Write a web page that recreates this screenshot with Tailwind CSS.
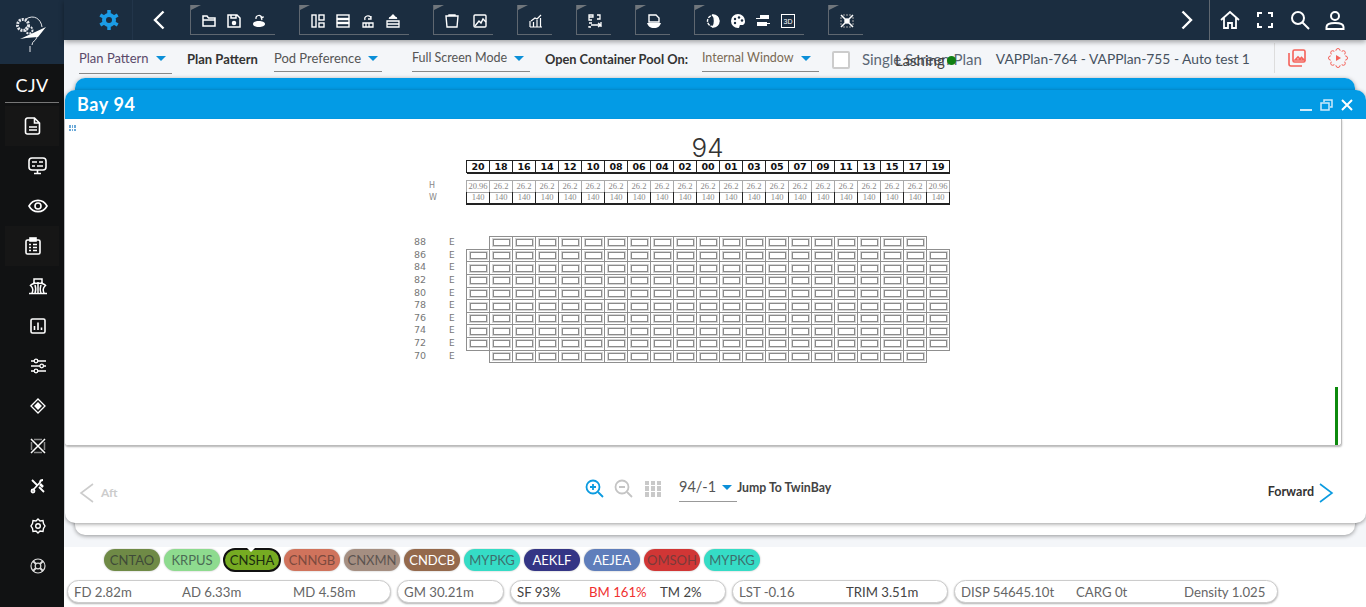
<!DOCTYPE html>
<html lang="en">
  <head>
    <meta charset="UTF-8" />
    <meta name="viewport" content="width=device-width, initial-scale=1.0" />
    <title>Bay 94</title>
    <script src="https://cdn.jsdelivr.net/npm/@tailwindcss/browser@4"></script>
  </head>

  <body class="bg-white font-['Lato',sans-serif] text-[#444]">
    <div class="flex w-[1366px] h-[607px] overflow-hidden">
      <!-- Sidebar -->
      <aside class="w-16 shrink-0 flex flex-col bg-[#111213] text-white">
        <div class="h-16 bg-[#1b2d40] flex items-center justify-center">
          <svg width="40" height="44" viewBox="0 0 40 44" fill="none" stroke="#e5e7eb">
            <circle cx="11" cy="15" r="5.500" stroke-width="3" stroke-dasharray="2 1" />
            <circle cx="17" cy="20" r="3.500" stroke-width="2" stroke-dasharray="2 1" />
            <path d="M14 9c8-5 15 0 16 8M25 27c-1 4-5 4-5 8M18 36v6" stroke-width="1" />
            <path d="M8 29l26-12-8 10-12 1z" fill="#fff" stroke="none" />
          </svg>
        </div>
        <div class="mx-[5px] h-[39px] pt-[5px] border-b border-[#777] flex items-center justify-center text-[18px] tracking-wide">CJV</div>
        <div class="flex flex-col mt-[3px]">
          <div class="mx-[5px] h-10 bg-[#161616] flex items-center justify-center">
            <svg class="ml-[2px]" width="18" height="18" viewBox="0 0 18 18" fill="none" stroke="#fff" stroke-width="1.600"><path d="M3.500 1h7l5 5v9a2 2 0 0 1-2 2h-10a2 2 0 0 1-2-2v-12a2 2 0 0 1 2-2zM5 10h8M5 13h8M10.500 1v5h5" /></svg>
          </div>
          <div class="h-10 flex items-center justify-center pl-3">
            <svg width="20" height="18" viewBox="0 0 20 18" fill="none" stroke="#fff" stroke-width="1.600"><rect x="1" y="1" width="17" height="12" rx="3" /><path d="M4 5h5M11 5h4M4 9h3M9 9h6M6 16.500h7M9.500 13v3" /></svg>
          </div>
          <div class="h-10 flex items-center justify-center pl-3">
            <svg width="20" height="14" viewBox="0 0 20 14" fill="none" stroke="#fff" stroke-width="1.600"><path d="M1 7c4-7.500 14-7.500 18 0-4 7.500-14 7.500-18 0z" /><circle cx="10" cy="7" r="3" /></svg>
          </div>
          <div class="mx-[5px] h-10 bg-[#161616] flex items-center justify-center">
            <svg class="ml-[2px]" width="16" height="18" viewBox="0 0 16 18" fill="none" stroke="#fff" stroke-width="1.600"><rect x="1" y="3" width="14" height="14" rx="1.500" /><rect x="5" y="1" width="6" height="3" fill="#fff" /><path d="M4 7.500h2M8 7.500h4M4 10.500h2M8 10.500h4M4 13.500h2M8 13.500h4" /></svg>
          </div>
          <div class="h-10 flex items-center justify-center pl-3">
            <svg width="20" height="18" viewBox="0 0 20 18" fill="none" stroke="#fff" stroke-width="1.500"><path d="M6 6V2h8v4M2 9c3-4 13-4 16 0M10 5v11M1 16.500h18M3 9c2 2 2 5 1 7M17 9c-2 2-2 5-1 7M7 8c1 3 1 6 0 8M13 8c-1 3-1 6 0 8" /></svg>
          </div>
          <div class="h-10 flex items-center justify-center pl-3">
            <svg width="16" height="16" viewBox="0 0 16 16" fill="none" stroke="#fff" stroke-width="1.600"><rect x="1" y="1" width="14" height="14" rx="1.500" /><path d="M4.500 12V8M8 12V4.500M11.500 12V9.500" /></svg>
          </div>
          <div class="h-10 flex items-center justify-center pl-3">
            <svg width="17" height="16" viewBox="0 0 17 16" fill="none" stroke="#fff" stroke-width="1.300"><path d="M1 3h3.500M8 3h8M1 8h9M13.500 8h2.500M1 13h3.500M8 13h8" /><circle cx="6" cy="3" r="1.800" /><circle cx="11.700" cy="8" r="1.800" /><circle cx="6" cy="13" r="1.800" /></svg>
          </div>
          <div class="h-10 flex items-center justify-center pl-3">
            <svg width="16" height="16" viewBox="0 0 16 16" fill="none" stroke="#fff" stroke-width="1.300"><path d="M8 1l7 7-7 7-7-7z" /><path d="M8 5l3 3-3 3-3-3z" fill="#fff" /></svg>
          </div>
          <div class="h-10 flex items-center justify-center pl-3">
            <svg width="16" height="16" viewBox="0 0 16 16" fill="none" stroke="#fff" stroke-width="1.500"><path d="M1 1l14 14M15 1L1 15" /><path d="M4 1.500h8M4 14.500h8M1.500 4v8M14.500 4v8" stroke="#888" /></svg>
          </div>
          <div class="h-10 flex items-center justify-center pl-3">
            <svg width="16" height="16" viewBox="0 0 16 16" fill="none" stroke="#fff" stroke-width="1.800"><path d="M2 2l5 5M9 9l5 5M13 2c-2 0-3 1-3 2.500L3 12" /><circle cx="3" cy="13" r="1.500" /><path d="M10 6l3 3" stroke-width="2.500" /></svg>
          </div>
          <div class="h-10 flex items-center justify-center pl-3">
            <svg width="16" height="16" viewBox="0 0 16 16" fill="none" stroke="#fff" stroke-width="1.400"><path d="M8 1l2 2 3-.500 .500 3 1.500 2.500-1.500 2.500-.500 3-3-.500-2 2-2-2-3 .500-.500-3L1 8l1.500-2.500.500-3 3 .500z" /><circle cx="8" cy="8" r="2.300" /></svg>
          </div>
          <div class="h-10 flex items-center justify-center pl-3">
            <svg width="16" height="16" viewBox="0 0 16 16" fill="none" stroke="#ddd" stroke-width="1.200"><circle cx="8" cy="8" r="7" /><circle cx="8" cy="8" r="2.800" /><path d="M3 3l3 3M13 3l-3 3M3 13l3-3M13 13l-3-3" stroke-width="1.800" /></svg>
          </div>
        </div>
      </aside>

      <main class="flex-1 min-w-0 flex flex-col">
        <!-- Top bar -->
        <header class="h-10 shrink-0 bg-[#1b2d40] flex items-start text-white relative z-10 shadow-[0_2px_5px_rgba(0,0,0,0.35)]">
          <div class="w-[69px] h-10 flex items-center justify-end pr-[13px] border-r border-[#22354a]">
            <svg width="20" height="20" viewBox="0 0 20 20" fill="none" stroke="#1b9ce6" stroke-width="4"><circle cx="10" cy="10" r="5" /><path d="M10 0v4M10 16v4M1.300 5l3.500 2M15.200 13l3.500 2M1.300 15l3.500-2M15.200 7l3.500-2" stroke-width="3.500" /></svg>
          </div>
          <div class="w-[57px] h-10 flex items-center pl-5">
            <svg width="12" height="20" viewBox="0 0 12 20" fill="none" stroke="#fff" stroke-width="2.400"><path d="M10.500 1.500L2 10l8.500 8.500" /></svg>
          </div>

          <div class="relative mt-[5px] w-[85px] h-[30px] border-l border-b border-[#5f6770] flex items-center gap-[11px] pl-[11px] pt-[2px]">
            <span class="absolute left-0 top-0 border-l-[10px] border-l-[#70767c] border-b-[5px] border-b-transparent border-t-0"></span>
            <svg width="14" height="14" viewBox="0 0 14 14" fill="none" stroke="#fff" stroke-width="1.500"><path d="M1 12V2h4l1.500 2H13v8zM1 6h12" /></svg>
            <svg width="14" height="14" viewBox="0 0 14 14" fill="none" stroke="#fff" stroke-width="1.500"><path d="M1 1h9l3 3v9H1zM4 1v3h5V1" /><circle cx="7" cy="9" r="1.500" fill="#fff" /></svg>
            <svg width="14" height="14" viewBox="0 0 14 14" fill="#fff"><path d="M1 10c0-2 3-3 6-3s6 1 6 3-3 3-6 3-6-1-6-3z" /><path d="M4 5a3 3 0 0 1 6-1l1-1M10 6l-1-3h3" fill="none" stroke="#fff" stroke-width="1.200" /></svg>
          </div>

          <div class="relative ml-6 mt-[5px] w-[110px] h-[30px] border-l border-b border-[#5f6770] flex items-center gap-[11px] pl-[11px] pt-[2px]">
            <span class="absolute left-0 top-0 border-l-[10px] border-l-[#70767c] border-b-[5px] border-b-transparent border-t-0"></span>
            <svg width="14" height="14" viewBox="0 0 14 14" fill="none" stroke="#fff" stroke-width="1.400"><rect x="1" y="1" width="4" height="12" /><rect x="8" y="1" width="5" height="5" /><rect x="8" y="9" width="5" height="4" /></svg>
            <svg width="14" height="14" viewBox="0 0 14 14" fill="none" stroke="#fff" stroke-width="1.400"><rect x="1" y="1" width="12" height="3.500" /><rect x="1" y="5.500" width="12" height="3" /><rect x="1" y="9.500" width="12" height="3.500" /></svg>
            <svg width="14" height="14" viewBox="0 0 14 14" fill="none" stroke="#fff" stroke-width="1.300"><path d="M2 13V9h10v4zM5 9v4M8 9v4M4 6a3 3 0 0 1 6-2M10 2v3H7" /></svg>
            <svg width="14" height="14" viewBox="0 0 14 14" fill="none" stroke="#fff" stroke-width="1.300"><path d="M1 13V7h12v6zM1 10h12M3 4h8M7 1v3" /><path d="M4 4L7 1l3 3z" fill="#fff" /></svg>
          </div>

          <div class="relative ml-6 mt-[5px] w-[60px] h-[30px] border-l border-b border-[#5f6770] flex items-center gap-[14px] pl-[11px] pt-[2px]">
            <span class="absolute left-0 top-0 border-l-[10px] border-l-[#70767c] border-b-[5px] border-b-transparent border-t-0"></span>
            <svg width="14" height="14" viewBox="0 0 14 14" fill="none" stroke="#fff" stroke-width="1.400"><path d="M1 2h12l-1 11H2zM4 2V1h6v1" /></svg>
            <svg width="14" height="14" viewBox="0 0 14 14" fill="none" stroke="#fff" stroke-width="1.400"><rect x="1" y="1" width="12" height="12" rx="1" /><path d="M2 12l4-5 2 2 2-4 3 3" /></svg>
          </div>

          <div class="relative ml-6 mt-[5px] w-[35px] h-[30px] border-l border-b border-[#5f6770] flex items-center pl-[11px] pt-[2px]">
            <span class="absolute left-0 top-0 border-l-[10px] border-l-[#70767c] border-b-[5px] border-b-transparent border-t-0"></span>
            <svg width="14" height="14" viewBox="0 0 14 14" fill="none" stroke="#fff" stroke-width="1.200"><path d="M1 13V7M1 13h12M4.500 13V8M8 13V6M11.500 13V4M2 7l4-3 2 1 4-4" /></svg>
          </div>

          <div class="relative ml-6 mt-[5px] w-[35px] h-[30px] border-l border-b border-[#5f6770] flex items-center pl-[11px] pt-[2px]">
            <span class="absolute left-0 top-0 border-l-[10px] border-l-[#70767c] border-b-[5px] border-b-transparent border-t-0"></span>
            <svg width="14" height="14" viewBox="0 0 14 14" fill="none" stroke="#fff" stroke-width="1.300"><path d="M1 1h4v2H1zM1 3v3h3M9 1h3v4H9M1 9h3M3 11h9M10 9l3 2-3 2M13 8v5M1 12v1h2" /></svg>
          </div>

          <div class="relative ml-6 mt-[5px] w-[35px] h-[30px] border-l border-b border-[#5f6770] flex items-center pl-[11px] pt-[2px]">
            <span class="absolute left-0 top-0 border-l-[10px] border-l-[#70767c] border-b-[5px] border-b-transparent border-t-0"></span>
            <svg width="14" height="14" viewBox="0 0 14 14" fill="#fff"><path d="M2 1h7l3 3v4H2z" fill="none" stroke="#fff" stroke-width="1.400" /><path d="M0 9h14c-1 3-3 5-7 5s-6-2-7-5z" /></svg>
          </div>

          <div class="relative ml-6 mt-[5px] w-[110px] h-[30px] border-l border-b border-[#5f6770] flex items-center gap-[11px] pl-[11px] pt-[2px]">
            <span class="absolute left-0 top-0 border-l-[10px] border-l-[#70767c] border-b-[5px] border-b-transparent border-t-0"></span>
            <svg width="14" height="14" viewBox="0 0 14 14" fill="none" stroke="#fff" stroke-width="1.400"><circle cx="7" cy="7" r="5.500" stroke-dasharray="3 1" /><path d="M7 1a6 6 0 0 1 0 12c2-3 2-9 0-12z" fill="#fff" /></svg>
            <svg width="14" height="14" viewBox="0 0 14 14" fill="#fff"><path d="M7 0a7 7 0 1 0 0 14c2 0 1-2 2-3h3c2-1 2-3 2-4a7 7 0 0 0-7-7z" /><circle cx="4" cy="5" r="1.200" fill="#1b2d40" /><circle cx="8" cy="3.500" r="1.200" fill="#1b2d40" /><circle cx="11" cy="6.500" r="1.200" fill="#1b2d40" /><circle cx="4" cy="9" r="1.200" fill="#1b2d40" /></svg>
            <svg width="14" height="14" viewBox="0 0 14 14" fill="#fff"><path d="M4 1h9v4H4zM1 8h10v4H1zM0 4h4v1H0zM11 9h3v1h-3z" /></svg>
            <svg width="14" height="14" viewBox="0 0 14 14" fill="none" stroke="#fff"><rect x=".5" y=".5" width="13" height="13" /><text x="7" y="10" text-anchor="middle" font-size="7" font-family="Liberation Sans" fill="#fff" stroke="none">3D</text></svg>
          </div>

          <div class="relative ml-6 mt-[5px] w-[35px] h-[30px] border-l border-b border-[#5f6770] flex items-center pl-[11px] pt-[2px]">
            <span class="absolute left-0 top-0 border-l-[10px] border-l-[#70767c] border-b-[5px] border-b-transparent border-t-0"></span>
            <svg width="14" height="14" viewBox="0 0 14 14" fill="none" stroke="#fff" stroke-width="1.500"><path d="M1 1l12 12M13 1L1 13" /><path d="M3 1h8M3 13h8M1 3v8M13 3v8" stroke="#aaa" stroke-width="1" stroke-dasharray="2 1" /><circle cx="7" cy="7" r="2" fill="#fff" /></svg>
          </div>

          <div class="ml-auto w-[52px] h-10 flex items-center justify-start pl-[24px]">
            <svg width="12" height="20" viewBox="0 0 12 20" fill="none" stroke="#fff" stroke-width="2.400"><path d="M1.500 1.500L10 10l-8.500 8.500" /></svg>
          </div>
          <div class="h-10 w-[157px] border-l border-[#5f6770] flex items-center pl-[10px] gap-[15px]">
            <svg width="20" height="20" viewBox="0 0 20 20" fill="none" stroke="#fff" stroke-width="1.800"><path d="M1 10l9-8 9 8M4 8v10h4v-5h4v5h4V8" /></svg>
            <svg width="20" height="20" viewBox="0 0 20 20" fill="none" stroke="#fff" stroke-width="2"><path d="M3 7V3h4M13 3h4v4M17 13v4h-4M7 17H3v-4" /></svg>
            <svg width="20" height="20" viewBox="0 0 20 20" fill="none" stroke="#fff" stroke-width="2"><circle cx="8" cy="8" r="6" /><path d="M12.500 12.500L19 19" /></svg>
            <svg width="20" height="20" viewBox="0 0 20 20" fill="none" stroke="#fff" stroke-width="2"><circle cx="10" cy="6" r="4" /><path d="M1.500 19v-2c0-3 5-4 8.500-4s8.500 1 8.500 4v2z" /></svg>
          </div>
        </header>

        <!-- Workspace -->
        <div class="h-[507px] shrink-0 relative bg-[#f4f6f9]">
          <!-- Options strip -->
          <div class="h-[38px] flex items-start text-[13px] relative">
            <div class="ml-[15px] mt-[8px] w-[93px] h-[26px] border-b border-[#888] flex items-start text-[#5a4a6a] pt-[1px]">Plan Pattern<span class="ml-[7px] mt-[7px] border-x-[5px] border-x-transparent border-t-[5px] border-t-[#0b8fd8]"></span></div>
            <div class="ml-[15px] mt-[10px] font-bold text-[#333]">Plan Pattern</div>
            <div class="ml-4 mt-[8px] w-[108px] h-[24px] border-b border-[#888] flex items-start text-[#555] pt-[1px]">Pod Preference<span class="ml-[7px] mt-[7px] border-x-[5px] border-x-transparent border-t-[5px] border-t-[#0b8fd8]"></span></div>
            <div class="ml-[30px] mt-[8px] w-[118px] h-[24px] border-b border-[#888] flex items-start text-[12.500px] text-[#555] pt-[1px]">Full Screen Mode<span class="ml-[7px] mt-[7px] border-x-[5px] border-x-transparent border-t-[5px] border-t-[#0b8fd8]"></span></div>
            <div class="ml-[15px] mt-[10px] font-bold text-[12.800px] text-[#333]">Open Container Pool On:</div>
            <div class="ml-[14px] mt-[8px] w-[117px] h-[24px] border-b border-[#888] flex items-start text-[12.500px] text-[#7a6a55] pt-[1px]">Internal Window<span class="ml-[7px] mt-[7px] border-x-[5px] border-x-transparent border-t-[5px] border-t-[#0b8fd8]"></span></div>
            <div class="ml-[13px] mt-[11px] w-[18px] h-[18px] rounded-[2px] border-2 border-[#ccc] bg-white"></div>
            <div class="ml-3 mt-[8px] text-[15px] text-[#5b6775] relative">Single Screen Plan
              <span class="absolute left-[33px] top-[1px] text-[#444] whitespace-nowrap">Lashing</span>
              <span class="absolute left-[85px] top-[8px] w-[9px] h-[9px] rounded-full bg-[#0f7f12]"></span>
            </div>
            <div class="ml-[14px] mt-[9px] text-[13.800px] text-[#46525f] whitespace-nowrap">VAPPlan-764 - VAPPlan-755 - Auto test 1</div>
            <div class="absolute left-[1210px] top-[3px] w-[92px] h-[30px] border-l border-[#ddd] flex items-center gap-[22px] pl-[13px]">
              <svg width="18" height="18" viewBox="0 0 18 18" fill="none" stroke="#f4625a" stroke-width="1.600"><rect x="5" y="1" width="12" height="12" rx="1.500" /><path d="M1 4v11a2 2 0 0 0 2 2h11M7 11l3-3 2 2 1.500-1.500L16 11z" /></svg>
              <svg width="20" height="20" viewBox="0 0 20 20" fill="none" stroke="#f4625a" stroke-width="1"><circle cx="17.500" cy="10" r="2" /><circle cx="15.300" cy="15.300" r="2" /><circle cx="10" cy="17.500" r="2" /><circle cx="4.700" cy="15.300" r="2" /><circle cx="2.500" cy="10" r="2" /><circle cx="4.700" cy="4.700" r="2" /><circle cx="10" cy="2.500" r="2" /><circle cx="15.300" cy="4.700" r="2" /><circle cx="10" cy="10" r="7.500" fill="#f4f6f9" stroke="none" /><path d="M8 7l5 3-5 3z" fill="#f4625a" stroke="none" /></svg>
            </div>
          </div>

          <!-- Back window -->
          <div class="absolute left-[11px] top-[38px] w-[1280px] h-[457px] rounded-[10px] bg-white shadow-[0_1px_4px_rgba(0,0,0,0.4)]">
            <div class="h-6 rounded-t-[10px] bg-[#039be5]"></div>
          </div>

          <!-- Bay window -->
          <section class="absolute left-[1px] top-[50px] w-[1301px] h-[433px] rounded-[10px] bg-white shadow-[0_1px_4px_rgba(0,0,0,0.4)] flex flex-col">
            <div class="h-[29px] shrink-0 rounded-t-[10px] bg-[#039be5] flex items-center text-white pl-3">
              <span class="text-[18px] font-bold tracking-[0.600px]">Bay 94</span>
              <div class="ml-auto flex items-center gap-2 pr-[13px]">
                <span class="w-3 h-[2px] bg-[#cfeafa] mt-[10px]"></span>
                <svg width="13" height="12" viewBox="0 0 13 12" fill="none" stroke="#cfeafa" stroke-width="1.500"><rect x="1" y="4" width="8" height="7" /><path d="M4 3V1h8v7h-2" /></svg>
                <svg width="12" height="12" viewBox="0 0 12 12" fill="none" stroke="#fff" stroke-width="2"><path d="M1 1l10 10M11 1L1 11" /></svg>
              </div>
            </div>

            <div class="h-[327px] shrink-0 mr-6 rounded-b-[3px] border-b border-r border-[#bbb] shadow-[0_1px_2px_rgba(0,0,0,0.3)] relative">
              <div class="absolute left-1 top-[6px] w-[7px] h-[6px] grid grid-cols-3 grid-rows-2 gap-[1px]">
                <i class="bg-[#6aa9d8]"></i><i class="bg-[#6aa9d8]"></i><i class="bg-[#6aa9d8]"></i><i class="bg-[#6aa9d8]"></i><i class="bg-[#6aa9d8]"></i><i class="bg-[#6aa9d8]"></i>
              </div>
              <div class="absolute right-[3px] bottom-0 w-[3px] h-[58px] bg-[#0d8a0d]"></div>

              <div class="pt-[12px] w-[483px] ml-[401px]">
                <div class="h-[29px] pt-[5px] text-center text-[26px] leading-[23px] text-[#333] font-['Inter',sans-serif] font-light">94</div>
                <div id="colHead" class="grid grid-cols-[repeat(21,23px)] border-l border-[#222] w-[484px] h-[13px]"></div>

                <div class="relative mt-[7px]">
                  <span class="absolute left-[-37px] top-0 text-[8px] leading-[11px] text-[#888] font-['DejaVu_Sans',sans-serif]">H</span>
                  <span class="absolute left-[-37px] top-[12px] text-[8px] leading-[11px] text-[#888] font-['DejaVu_Sans',sans-serif]">W</span>
                  <div id="heightRow" class="grid grid-cols-[repeat(21,23px)] w-[484px] h-[12px] border-l border-[#aaa]"></div>
                  <div id="weightRow" class="grid grid-cols-[repeat(21,23px)] w-[484px] h-[13px] border-l border-[#222]"></div>
                </div>

                <div id="tiers" class="mt-[31px] relative"></div>
              </div>
            </div>

            <!-- Bay navigation -->
            <div class="flex-1 flex items-center relative pt-[16px] pl-[14px] pr-[32px]">
              <svg width="16" height="20" viewBox="0 0 16 20" fill="none" stroke="#ccc" stroke-width="1.600"><path d="M14 1L2 10l12 9" /></svg>
              <span class="ml-[6px] text-[12px] font-bold text-[#ccc]">Aft</span>
              <div class="absolute left-[520px] top-[29px] flex items-center">
                <svg width="19" height="19" viewBox="0 0 19 19" fill="none" stroke="#0b9be0" stroke-width="1.800"><circle cx="8" cy="8" r="6.500" /><path d="M13 13l5 5M5 8h6M8 5v6" /></svg>
                <svg class="ml-[10px]" width="19" height="19" viewBox="0 0 19 19" fill="none" stroke="#c4c4c4" stroke-width="1.800"><circle cx="8" cy="8" r="6.500" /><path d="M13 13l5 5M5 8h6" /></svg>
                <div class="ml-3 grid grid-cols-3 gap-[1.500px] w-4 h-4">
                  <i class="bg-[#c9c9c9]"></i><i class="bg-[#c9c9c9]"></i><i class="bg-[#c9c9c9]"></i><i class="bg-[#c9c9c9]"></i><i class="bg-[#c9c9c9]"></i><i class="bg-[#c9c9c9]"></i><i class="bg-[#c9c9c9]"></i><i class="bg-[#c9c9c9]"></i><i class="bg-[#c9c9c9]"></i>
                </div>
                <div class="ml-[18px] w-[58px] h-[24px] border-b border-[#999] flex items-start text-[14.500px] leading-[18px] text-[#555] mt-[3px]">94/-1<span class="ml-[6px] mt-[7px] border-x-[5px] border-x-transparent border-t-[5px] border-t-[#0b8fd8]"></span></div>
                <span class="text-[12.300px] font-bold text-[#444] whitespace-nowrap">Jump To TwinBay</span>
              </div>
              <span class="ml-auto text-[12.500px] font-bold text-[#333]">Forward</span>
              <svg class="ml-[4px]" width="16" height="20" viewBox="0 0 16 20" fill="none" stroke="#0b9be0" stroke-width="1.600"><path d="M2 1l12 9-12 9" /></svg>
            </div>
          </section>
        </div>

        <!-- Ports -->
        <div class="h-[33px] shrink-0 pl-10 pt-[2px] flex gap-1 text-[13px]">
          <span class="w-14 h-[22px] pt-[1px] rounded-full bg-[#6f8a46] text-[#3f4a38] flex items-center justify-center shadow-[0_0_2px_rgba(0,0,0,0.3)]">CNTAO</span>
          <span class="w-14 h-[22px] pt-[1px] rounded-full bg-[#8edb8f] text-[#4b6b55] flex items-center justify-center shadow-[0_0_2px_rgba(0,0,0,0.3)]">KRPUS</span>
          <span class="relative -mx-[1px] w-[58px] h-[24px] pt-[1px] -mt-[1px] rounded-full bg-[#76ab22] border-2 border-[#111] text-[#1a2a10] flex items-center justify-center">CNSHA
            <i class="absolute left-[22px] -top-[2px] border-x-[4px] border-x-transparent border-t-[4px] border-t-white"></i>
          </span>
          <span class="w-14 h-[22px] pt-[1px] rounded-full bg-[#d0735c] text-[#7c4a3e] flex items-center justify-center shadow-[0_0_2px_rgba(0,0,0,0.3)]">CNNGB</span>
          <span class="w-14 h-[22px] pt-[1px] rounded-full bg-[#a58f82] text-[#5c5450] flex items-center justify-center shadow-[0_0_2px_rgba(0,0,0,0.3)]">CNXMN</span>
          <span class="w-14 h-[22px] pt-[1px] rounded-full bg-[#94694c] text-white flex items-center justify-center shadow-[0_0_2px_rgba(0,0,0,0.3)]">CNDCB</span>
          <span class="w-14 h-[22px] pt-[1px] rounded-full bg-[#35dcc6] text-[#3d6f6d] flex items-center justify-center shadow-[0_0_2px_rgba(0,0,0,0.3)]">MYPKG</span>
          <span class="w-14 h-[22px] pt-[1px] rounded-full bg-[#343585] text-white flex items-center justify-center shadow-[0_0_2px_rgba(0,0,0,0.3)]">AEKLF</span>
          <span class="w-14 h-[22px] pt-[1px] rounded-full bg-[#5f7ebb] text-white flex items-center justify-center shadow-[0_0_2px_rgba(0,0,0,0.3)]">AEJEA</span>
          <span class="w-14 h-[22px] pt-[1px] rounded-full bg-[#d13635] text-[#7a3a3a] flex items-center justify-center shadow-[0_0_2px_rgba(0,0,0,0.3)]">OMSOH</span>
          <span class="w-14 h-[22px] pt-[1px] rounded-full bg-[#35dcc6] text-[#3d6f6d] flex items-center justify-center shadow-[0_0_2px_rgba(0,0,0,0.3)]">MYPKG</span>
        </div>

        <!-- Stability figures -->
        <div class="h-[27px] shrink-0 pl-[3px] flex gap-[6px] text-[13.200px] text-[#666]">
          <div class="w-[324px] h-[23px] pt-[2px] rounded-full bg-white border border-[#ccc] shadow-[0_1px_2px_rgba(0,0,0,0.3)] flex items-center pl-[6px]">
            <span class="w-[108px]">FD 2.82m</span><span class="w-[111px]">AD 6.33m</span><span>MD 4.58m</span>
          </div>
          <div class="w-[107px] h-[23px] pt-[2px] rounded-full bg-white border border-[#ccc] shadow-[0_1px_2px_rgba(0,0,0,0.3)] flex items-center pl-[6px]">GM 30.21m</div>
          <div class="w-[216px] h-[23px] pt-[2px] rounded-full bg-white border border-[#ccc] shadow-[0_1px_2px_rgba(0,0,0,0.3)] flex items-center pl-[6px] text-[#444]">
            <span class="w-[72px]">SF 93%</span><span class="w-[71px] text-[#f03030]">BM 161%</span><span>TM 2%</span>
          </div>
          <div class="w-[216px] h-[23px] pt-[2px] rounded-full bg-white border border-[#ccc] shadow-[0_1px_2px_rgba(0,0,0,0.3)] flex items-center pl-[6px]">
            <span class="w-[107px]">LST -0.16</span><span class="text-[#444]">TRIM 3.51m</span>
          </div>
          <div class="w-[324px] h-[23px] pt-[2px] rounded-full bg-white border border-[#ccc] shadow-[0_1px_2px_rgba(0,0,0,0.3)] flex items-center pl-[6px]">
            <span class="w-[115px]">DISP 54645.10t</span><span class="w-[108px]">CARG 0t</span><span>Density 1.025</span>
          </div>
        </div>
      </main>
    </div>

    <script>
      const cols = ["20", "18", "16", "14", "12", "10", "08", "06", "04", "02", "00", "01", "03", "05", "07", "09", "11", "13", "15", "17", "19"];
      const tiers = ["88", "86", "84", "82", "80", "78", "76", "74", "72", "70"];

      document.getElementById("colHead").innerHTML = cols
        .map((c) => `<div class="border-y border-r border-[#222] border-b-2 text-center text-[9.500px] leading-[11px] font-bold text-[#111] font-['DejaVu_Sans',sans-serif]">${c}</div>`)
        .join("");

      document.getElementById("heightRow").innerHTML = cols
        .map((c, i) => `<div class="border-y border-r border-[#aaa] text-center text-[8.500px] leading-[11px] text-[#888] font-['Liberation_Serif',serif]">${i === 0 || i === 20 ? "20.96" : "26.2"}</div>`)
        .join("");

      document.getElementById("weightRow").innerHTML = cols
        .map(() => `<div class="border-b-2 border-r border-[#222] text-center text-[8.500px] leading-[11px] text-[#888] font-['Liberation_Serif',serif]">140</div>`)
        .join("");

      document.getElementById("tiers").innerHTML = tiers
        .map((t, r) => {
          const cells = cols
            .map((c, i) => {
              const narrow = r === 0 || r === 9;
              if (narrow && (i === 0 || i === 20)) return `<div></div>`;
              return `<div class="-mr-[1px] -mb-[1px] border border-[#8f8f8f] flex items-center justify-center"><div class="w-[17px] h-[7px] bg-white border border-[#8a8a8a] shadow-[0_0_0_1px_#d4d4d4]"></div></div>`;
            })
            .join("");
          return `<div class="relative h-[12.650px]">
            <span class="absolute left-[-52px] top-0 text-[9.500px] leading-[12px] text-[#777] font-['DejaVu_Sans',sans-serif]">${t}</span>
            <span class="absolute left-[-17px] top-0 text-[9px] leading-[12px] text-[#777] font-['DejaVu_Sans',sans-serif]">E</span>
            <div class="grid grid-cols-[repeat(21,23px)] h-full w-[484px]">${cells}</div>
          </div>`;
        })
        .join("");
    </script>
  </body>
</html>
